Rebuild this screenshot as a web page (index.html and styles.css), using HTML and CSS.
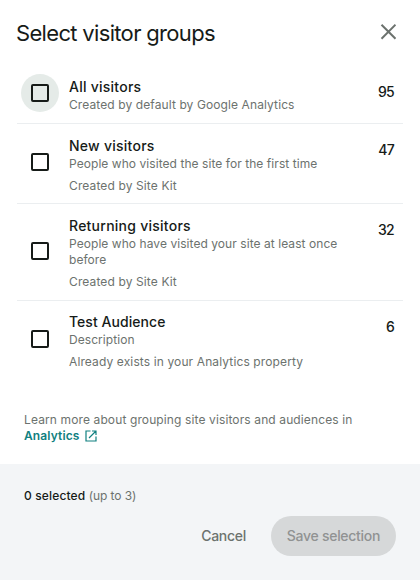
FILE: index.html
```html
<!DOCTYPE html>
<html lang="en">
<head>
<meta charset="utf-8">
<title>Select visitor groups</title>
<link rel="stylesheet" href="styles.css">
</head>
<body>
<main class="panel">
  <header class="header">
    <h1 class="title">Select visitor groups</h1>
    <button class="close" aria-label="Close"><svg width="16" height="16" viewBox="0 0 16 16"><path d="M1.5 .7 15.5 14.7M15.5 .7 1.5 14.7" fill="none" stroke="#6c726e" stroke-width="2"/></svg></button>
  </header>
  <section class="list">
    <label class="item item-first">
      <span class="check check-focus"><span class="box"></span></span>
      <span class="info"><span class="name">All visitors</span><span class="desc">Created by default by Google Analytics</span></span>
      <span class="count">95</span>
    </label>
    <label class="item item-new">
      <span class="check"><span class="box"></span></span>
      <span class="info"><span class="name">New visitors</span><span class="desc">People who visited the site for the first time</span><span class="source">Created by Site Kit</span></span>
      <span class="count">47</span>
    </label>
    <label class="item item-returning">
      <span class="check"><span class="box"></span></span>
      <span class="info"><span class="name">Returning visitors</span><span class="desc">People who have visited your site at least once<br>before</span><span class="source">Created by Site Kit</span></span>
      <span class="count">32</span>
    </label>
    <label class="item item-test">
      <span class="check"><span class="box"></span></span>
      <span class="info"><span class="name name-tight">Test Audience</span><span class="desc">Description</span><span class="source">Already exists in your Analytics property</span></span>
      <span class="count">6</span>
    </label>
  </section>
  <p class="learn">Learn more about grouping site visitors and audiences in<br><a class="link">Analytics<svg class="external" width="12" height="12" viewBox="0 0 12 12"><path d="M5.5 1H1v10h10V6.5M7 1h4v4M11 1 4 8" fill="none" stroke="#108080" stroke-width="1.2"/></svg></a></p>
  <footer class="footer">
    <p class="selected"><strong class="number">0 selected</strong> <span class="limit">(up to 3)</span></p>
    <div class="actions"><button class="cancel">Cancel</button><button class="save" disabled>Save selection</button></div>
  </footer>
</main>
</body>
</html>
```
FILE: styles.css
```css
* { box-sizing: border-box; }
body { margin: 0; background: #fff; font-family: Inter, sans-serif; color: #161b18; }
button { border: 0; padding: 0; background: none; font-family: inherit; }
.panel { width: 420px; height: 580px; display: flex; flex-direction: column; }
.header { height: 66px; flex: none; display: flex; justify-content: space-between; padding: 19px 24px 0 16px; }
.title { margin: 0; font-size: 22px; line-height: 28px; font-weight: 400; letter-spacing: -.67px; white-space: nowrap; }
.close { width: 16px; height: 16px; margin-top: 5px; }
.close svg { display: block; }
.list { margin: 0 17px; flex: none; }
.item { display: flex; border-bottom: 1px solid #ebeef0; }
.item-first { height: 58px; padding-top: 13px; }
.item-new { height: 80px; padding-top: 14px; }
.item-returning { height: 97px; padding-top: 14px; }
.item-test { height: 80px; padding-top: 13px; border: 0; }
.check { width: 38px; height: 38px; margin: 5px 10px 0 4px; border-radius: 50%; display: flex; align-items: center; justify-content: center; flex: none; }
.item-first .check { margin-top: -5px; }
.item-returning .check { margin-top: 14px; }
.item-test .check { margin-top: 6px; }
.check-focus { background: #e5ebe8; }
.box { width: 18px; height: 18px; border: 2px solid #161b18; border-radius: 2px; }
.info { flex: 1; display: flex; flex-direction: column; }
.name { height: 18px; font-size: 14px; line-height: 16px; font-weight: 500; letter-spacing: .25px; }
.name-tight { letter-spacing: .05px; }
.desc, .source { font-size: 12px; line-height: 16px; letter-spacing: .12px; color: #6c726e; white-space: nowrap; }
.desc { letter-spacing: .06px; }
.item-first .desc { letter-spacing: .1px; }
.source { margin-top: 6px; }
.count { margin: 4px 9px 0 0; font-size: 14px; line-height: 18px; font-weight: 500; letter-spacing: -.7px; }
.item-new .count, .item-returning .count { margin-top: 3px; }
.learn { margin: 31px 0 0 24px; font-size: 12px; line-height: 16px; letter-spacing: .12px; color: #6c726e; white-space: nowrap; }
.link { color: #108080; font-weight: 600; }
.external { margin-left: 5px; vertical-align: -2px; }
.footer { height: 116px; margin-top: auto; flex: none; padding: 24px 24px 0; background: #f3f5f7; }
.selected { margin: 0; font-size: 12px; line-height: 16px; color: #6c726e; }
.number { font-weight: 500; color: #161b18; letter-spacing: .15px; }
.limit { letter-spacing: -.1px; }
.actions { display: flex; justify-content: flex-end; align-items: center; gap: 25px; margin-top: 12px; }
.cancel, .save { font-size: 14px; line-height: 20px; font-weight: 500; letter-spacing: -.28px; color: #6c726e; white-space: nowrap; }
.save { width: 125px; height: 40px; border-radius: 20px; background: #d6d8d9; color: #909292; }
```
